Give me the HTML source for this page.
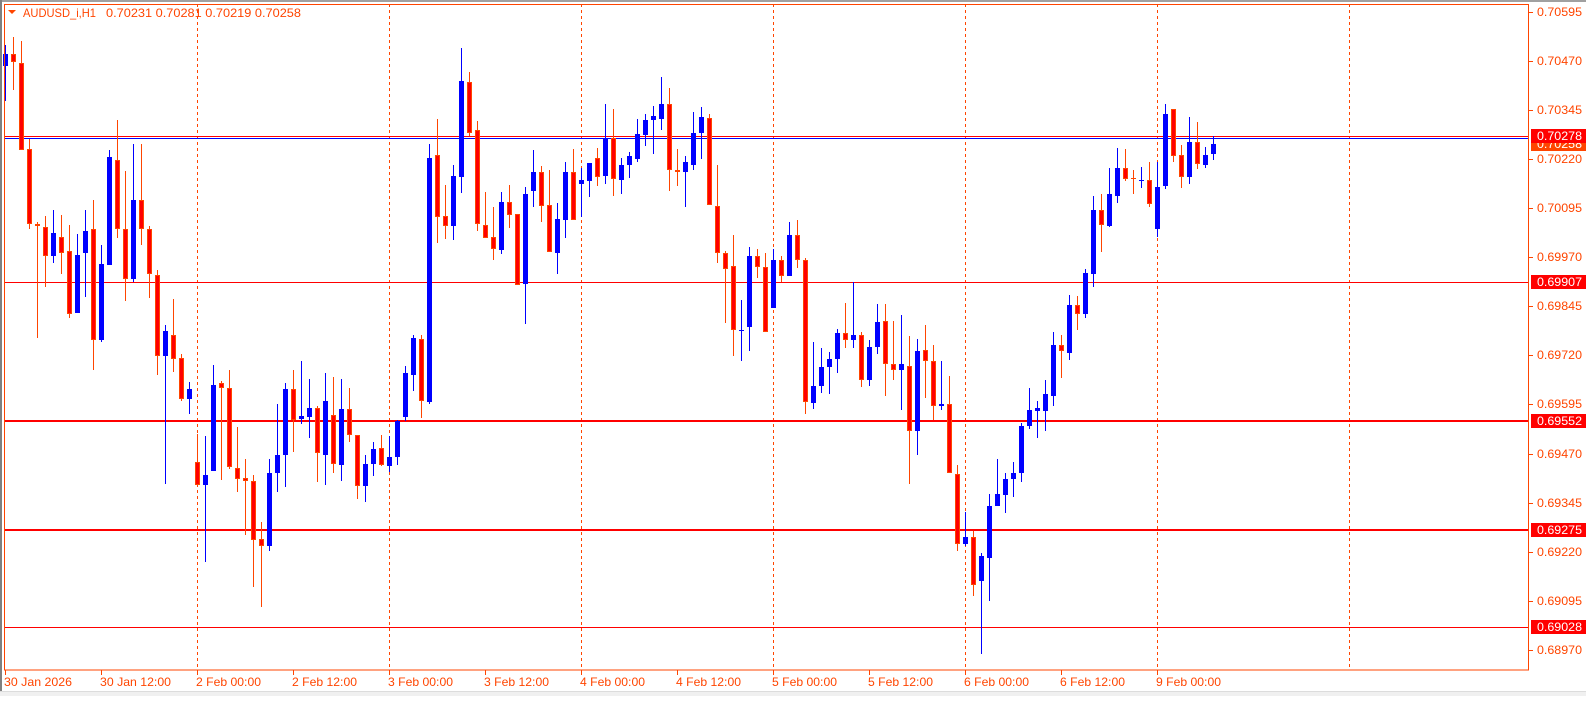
<!DOCTYPE html>
<html><head><meta charset="utf-8">
<style>
html,body{margin:0;padding:0;background:#fff;}
body{width:1586px;height:696px;overflow:hidden;position:relative;font-family:"Liberation Sans",sans-serif;}
svg text{font-family:"Liberation Sans",sans-serif;font-size:12px;}
</style></head><body>
<svg id="c" width="1586" height="696" xmlns="http://www.w3.org/2000/svg"></svg>
<script>
var d=[
"b 128 158 107 240","r 128 148 88 215","r 150 357 97 357","r 355 533 330 545","r 533 538 527 803",
"r 540 609 513 683","b 554 609 500 625","r 563 602 511 652","r 597 747 535 755","b 607 743 556 743",
"b 549 602 499 705","r 545 807 475 880","b 627 807 582 812","b 373 629 356 629","r 380 543 285 565",
"r 545 663 406 714","b 475 662 342 670","r 475 543 342 583","r 543 650 537 707","r 653 847 641 890",
"b 787 847 772 1150","r 795 852 710 883","r 851 947 840 953","b 924 947 907 983","r 1098 1153 1030 1153",
"b 1128 1153 1035 1335","b 915 1118 867 1118","r 910 922 905 1140","r 922 1110 880 1115","r 1112 1138 1014 1170",
"r 1136 1143 1090 1270","r 1143 1283 1128 1395","r 1280 1298 1240 1443","b 1124 1298 1090 1308","b 1080 1125 960 1170",
"b 924 1082 910 1157","r 925 997 880 1075","b 988 995 857 1008","b 969 990 900 1040","r 969 1077 965 1145",
"b 953 1082 886 1153","r 985 1103 895 1125","b 971 1106 900 1143","r 972 1033 922 1050","r 1033 1155 1033 1185",
"b 1102 1155 1080 1193","b 1067 1103 1050 1130","r 1065 1105 1033 1108","b 1085 1107 1037 1122","b 1000 1085 997 1105",
"b 886 990 870 1000","b 803 890 795 930","r 805 953 795 993","b 375 955 343 960","r 368 515 283 577",
"r 513 538 440 568","b 418 538 393 570","b 192 420 113 458","r 195 315 170 322","r 310 533 288 548",
"r 535 566 456 566","r 563 592 492 617","b 480 595 456 603","r 480 512 440 542","r 508 676 508 678",
"b 461 675 444 771","b 408 455 356 493","r 408 490 394 527","r 487 598 404 598","b 520 600 482 652",
"b 408 523 384 565","r 408 522 354 522","b 428 436 398 515","b 387 431 387 468","r 375 420 352 443",
"b 328 418 248 437","r 328 425 259 465","b 392 428 375 460","b 370 393 360 423","b 318 378 283 385",
"b 285 320 270 347","b 276 286 252 365","b 248 283 183 310","r 247 405 210 453","r 404 408 353 442",
"b 385 408 370 493","b 316 393 266 405","b 278 315 254 378","r 280 488 270 488","r 490 602 393 625",
"r 601 640 597 767","r 632 785 558 845","b 783 786 713 858","b 608 776 587 833","r 608 635 592 660",
"r 635 790 601 790","b 618 732 592 732","r 618 655 608 670","b 558 655 527 655","r 558 618 523 637",
"r 618 955 612 983","b 917 958 813 972","b 872 917 827 933","b 853 872 836 937","b 791 853 782 886",
"r 791 808 720 826","b 795 808 671 828","r 795 903 790 920","b 825 903 808 918","b 765 825 722 840",
"r 763 865 722 940","r 865 878 763 903","b 865 880 748 975","r 870 1025 798 1150","b 835 1025 805 1082",
"r 832 858 772 945","r 858 965 820 997","b 960 965 858 975","r 960 1125 893 1125","r 1126 1293 1105 1308",
"b 1276 1292 1216 1298","r 1276 1390 1262 1417","b 1321 1380 1313 1553","b 1202 1325 1173 1427","b 1173 1203 1090 1203",
"b 1137 1177 1123 1218","b 1123 1139 1098 1182","b 1012 1125 1005 1145","b 973 1012 923 1020","b 970 977 953 1040",
"b 936 977 903 1025","b 820 940 790 965","r 820 835 795 897","b 725 838 700 855","r 725 747 703 783",
"b 649 747 638 755","b 500 652 465 682","r 500 535 462 598","b 461 538 398 540","b 398 465 351 482",
"r 398 425 355 430","r 422 426 405 462","b 428 431 397 446","r 428 485 386 493","b 444 543 386 563",
"b 270 443 248 448","r 258 370 258 385","r 368 420 345 446","b 337 420 278 437","r 337 390 290 402",
"b 368 391 350 398","b 342 367 322 380"];
var O="#ff4500",s="";
s+='<rect x="0" y="0" width="1586" height="2" fill="#a0a0a0"/>';
s+='<rect x="0" y="0" width="2" height="696" fill="#808080"/>';
s+='<rect x="0" y="691" width="1586" height="5" fill="#f0f0f0"/><rect x="0" y="691" width="1586" height="1" fill="#dcdcdc"/>';
[197,389,581,773,965,1157,1349].forEach(function(x){s+='<line x1="'+(x+0.5)+'" y1="4" x2="'+(x+0.5)+'" y2="670" stroke="'+O+'" stroke-width="1" stroke-dasharray="3,3"/>';});
s+='<line x1="4" y1="136.5" x2="1529" y2="136.5" stroke="#ff0000"/>';
s+='<line x1="4" y1="138.5" x2="1529" y2="138.5" stroke="#0000ff"/>';
s+='<line x1="4" y1="282.5" x2="1529" y2="282.5" stroke="#ff0000"/>';
s+='<rect x="4" y="420" width="1525" height="2" fill="#ff0000"/>';
s+='<rect x="4" y="529" width="1525" height="2" fill="#ff0000"/>';
s+='<line x1="4" y1="627.5" x2="1529" y2="627.5" stroke="#ff0000"/>';
var k=2.376;
d.forEach(function(r,i){var p=r.split(" "),x=5+i*8,bt=+p[1]/k,bb=+p[2]/k,wt=+p[3]/k,wb=+p[4]/k;
 bt=Math.round(bt);bb=Math.round(bb);wt=Math.round(wt);wb=Math.round(wb);if(bb-bt<1)bb=bt+1;
 if(p[0]=="b"){s+='<rect x="'+x+'" y="'+wt+'" width="1" height="'+(wb-wt)+'" fill="#0000ff"/>';
  s+='<rect x="'+(x-2)+'" y="'+bt+'" width="5" height="'+(bb-bt)+'" fill="#0000ff"/>';}
 else{s+='<rect x="'+x+'" y="'+wt+'" width="1" height="'+(wb-wt)+'" fill="'+O+'"/>';
  s+='<rect x="'+(x-2)+'" y="'+bt+'" width="5" height="'+(bb-bt)+'" fill="'+O+'"/>';
  if(bb-bt>2)s+='<rect x="'+(x-1)+'" y="'+(bt+1)+'" width="3" height="'+(bb-bt-2)+'" fill="#ff0000"/>';}
});
s+='<rect x="4.5" y="4.5" width="1524" height="665.5" fill="none" stroke="'+O+'"/>';
var labs=["0.70595","0.70470","0.70345","0.70220","0.70095","0.69970","0.69845","0.69720","0.69595","0.69470","0.69345","0.69220","0.69095","0.68970"];
function T(x,y,c,t,L){return '<text x="'+x+'" y="'+y+'" fill="'+c+'" textLength="'+L+'" lengthAdjust="spacingAndGlyphs">'+t+'</text>';}
labs.forEach(function(l){var y=Math.round(627-(+l-0.69028)*39249);
 s+='<line x1="1529" y1="'+(y+0.5)+'" x2="1533" y2="'+(y+0.5)+'" stroke="'+O+'"/>';
 s+=T(1537,y+4,O,l,45);});
s+='<rect x="1531" y="137" width="55" height="14" fill="#ff4500"/>'+T(1537,148,"#fff","0.70258",45);
[["0.70278",136],["0.69907",282],["0.69552",421],["0.69275",530],["0.69028",627]].forEach(function(a){
 s+='<rect x="1531" y="'+(a[1]-7)+'" width="55" height="14" fill="#ff0000"/>'+T(1537,a[1]+4,"#fff",a[0],45);});
var tl=["30 Jan 2026","30 Jan 12:00","2 Feb 00:00","2 Feb 12:00","3 Feb 00:00","3 Feb 12:00","4 Feb 00:00","4 Feb 12:00","5 Feb 00:00","5 Feb 12:00","6 Feb 00:00","6 Feb 12:00","9 Feb 00:00"];
tl.forEach(function(t,i){var x=5+i*96;var L=i==0?68:(i==1?71:65);
 s+='<line x1="'+(x+0.5)+'" y1="670" x2="'+(x+0.5)+'" y2="675" stroke="'+O+'"/>';
 s+=T(x-1,686,O,t,L);});
s+='<polygon points="8,10 16,10 12,14" fill="'+O+'"/>';
s+=T(23,17,O,"AUDUSD_i,H1",73)+T(106,17,O,"0.70231 0.70281 0.70219 0.70258",195);
document.getElementById("c").innerHTML=s;
</script>
</body></html>
